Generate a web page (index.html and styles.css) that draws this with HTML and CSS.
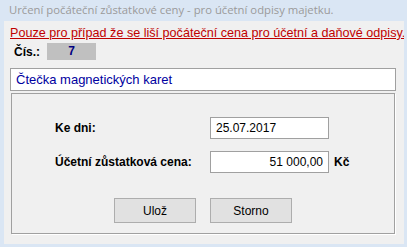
FILE: index.html
```html
<!DOCTYPE html>
<html lang="cs">

<head>
  <meta charset="UTF-8">
  <meta name="viewport" content="width=device-width, initial-scale=1.0">
  <title>Určení počáteční zůstatkové ceny</title>
  <link rel="stylesheet" href="styles.css">
</head>

<body>
  <div class="window">
    <!-- Titulek okna -->
    <div class="title">Určení počáteční zůstatkové ceny - pro účetní odpisy majetku.</div>

    <div class="client">
      <p class="warning">Pouze pro případ že se liší počáteční cena pro účetní a daňové odpisy.</p>

      <div class="number-row">
        <span class="label">Čís.:</span>
        <span class="number">7</span>
      </div>

      <div class="name-box">Čtečka magnetických karet</div>

      <!-- Formulář -->
      <form class="panel">
        <div class="fields">
          <label class="label" for="date">Ke dni:</label>
          <input type="text" id="date" class="field" value="25.07.2017">
          <span></span>

          <label class="label" for="price">Účetní zůstatková cena:</label>
          <input type="text" id="price" class="field field-right" value="51 000,00">
          <span class="label unit">Kč</span>
        </div>

        <div class="buttons">
          <button type="submit" class="btn">Ulož</button>
          <button type="button" class="btn">Storno</button>
        </div>
      </form>
    </div>
  </div>
</body>

</html>
```

FILE: styles.css
```css
body {
  margin: 0;
  background-color: #dae6f4;
  font-family: "Liberation Sans", Arial, sans-serif;
  font-size: 12px;
}

.window {
  width: 407px;
  height: 247px;
}

.title {
  height: 21px;
  line-height: 20px;
  padding-left: 9px;
  color: #9a9a9a;
  font-family: "Open Sans", "Noto Sans", sans-serif;
  font-size: 11.3px;
  white-space: nowrap;
}

.client {
  margin: 0 3px 0 4px;
  height: 223px;
  background-color: #f0f0f0;
  overflow: hidden;
}

.warning {
  margin: 0;
  padding: 4px 0 0 6px;
  height: 16px;
  line-height: 17px;
  font-size: 12.6px;
  color: #c00000;
  text-decoration: underline;
  white-space: nowrap;
}

.number-row {
  display: flex;
  align-items: center;
  margin-top: 2px;
  padding-left: 10px;
  height: 17px;
}

.number-row .label {
  width: 33px;
}

.label {
  font-weight: bold;
  color: #000;
}

.number {
  width: 49px;
  height: 17px;
  line-height: 17px;
  background-color: #c0c0c0;
  color: #000080;
  font-weight: bold;
  text-align: center;
}

.name-box {
  margin: 8px 8px 0 6px;
  height: 21px;
  line-height: 21px;
  padding-left: 5px;
  background-color: #fff;
  border: 1px solid #a0a0a0;
  color: #0000a0;
  font-size: 13px;
}

/* Panel s poli */
.panel {
  margin: 2px 9px 0 7px;
  height: 141px;
  border: 1px solid #a0a0a0;
  box-shadow: 1px 1px 0 #fff;
  padding-top: 23px;
  box-sizing: border-box;
}

.fields {
  display: grid;
  grid-template-columns: 155px 119px auto;
  row-gap: 12px;
  align-items: center;
  padding-left: 43px;
}

.field {
  box-sizing: border-box;
  width: 119px;
  height: 22px;
  margin: 0;
  padding: 0 5px;
  border: 1px solid #a0a0a0;
  background-color: #fff;
  font-family: "Liberation Sans", Arial, sans-serif;
  font-size: 12px;
  color: #000;
}

.field-right {
  text-align: right;
}

.unit {
  padding-left: 5px;
}

.buttons {
  display: flex;
  justify-content: center;
  gap: 14px;
  margin-top: 25px;
}

.btn {
  width: 82px;
  height: 25px;
  background-color: #e1e1e1;
  border: 1px solid #adadad;
  font-family: "Liberation Sans", Arial, sans-serif;
  font-size: 12px;
  color: #000;
  padding: 0;
}
```
